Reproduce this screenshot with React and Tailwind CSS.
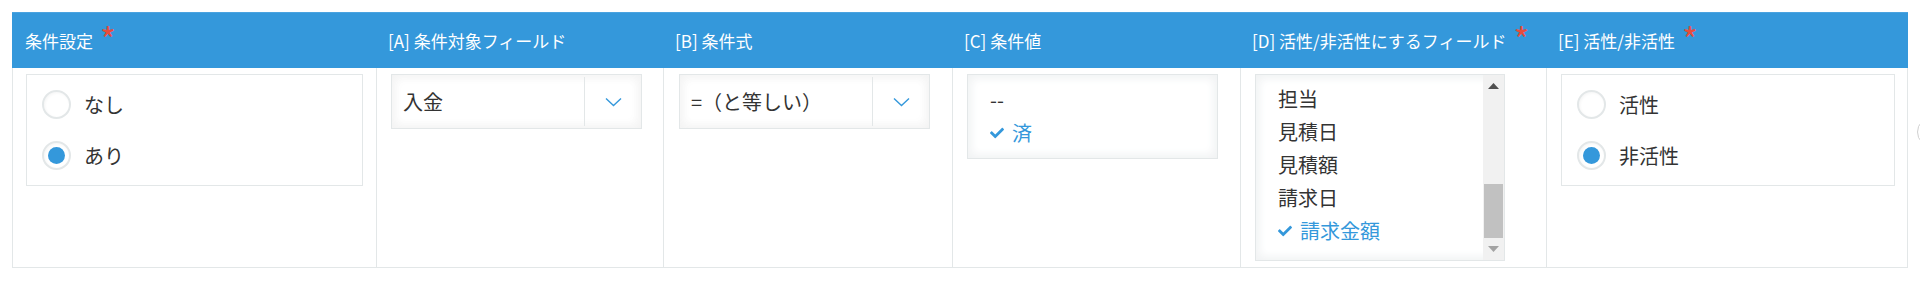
import { FaCheck } from 'react-icons/fa';

const COLS = 'grid grid-cols-[363px_287px_289px_288px_306px_363px]';
const FONT = { fontFamily: '"Noto Sans CJK JP", "Noto Sans", sans-serif' };

const headers = [
    { label: '条件設定', required: true },
    { label: '[A] 条件対象フィールド' },
    { label: '[B] 条件式' },
    { label: '[C] 条件値' },
    { label: '[D] 活性/非活性にするフィールド', required: true },
    { label: '[E] 活性/非活性', required: true },
];

const Required = () => (
    <span className="ml-[7px] self-start mt-[9px] text-[34px] leading-[34px] text-[#e74c3c]">*</span>
);

const RadioGroup = ({ options, selected }) => (
    <div className="border border-[#e3e7e8] bg-white py-[4px] pl-[15px]">
        {options.map((opt) => (
            <div key={opt} className="h-[51px] flex items-center">
                <span className="w-[29px] h-[29px] rounded-full border-2 border-[#e3e7e8] bg-white flex items-center justify-center shadow-[inset_1px_1px_3px_#f5f5f5]">
                    {opt === selected && <span className="w-[17px] h-[17px] rounded-full bg-[#3498db]"></span>}
                </span>
                <span className="ml-[13px] text-[20px] text-[#333]">{opt}</span>
            </div>
        ))}
    </div>
);

const Chevron = () => (
    <svg width="17" height="10" viewBox="0 0 17 10">
        <polyline points="1,1.5 8.5,8.5 16,1.5" fill="none" stroke="#3498db" strokeWidth="1.4" />
    </svg>
);

const SelectBox = ({ value }) => (
    <div className="w-[251px] h-[55px] border border-[#e3e7e8] bg-white flex shadow-[inset_1px_1px_12px_#f3f3f3,inset_-1px_-1px_12px_#f3f3f3]">
        <div className="flex-1 pl-[11px] flex items-center text-[20px] text-[#333] whitespace-nowrap">{value}</div>
        <div className="w-px bg-[#e3e7e8] my-[2px]"></div>
        <div className="w-[56px] flex items-center justify-center"><Chevron /></div>
    </div>
);

const CheckItem = ({ label, checked }) => (
    <div className={`h-[33px] flex items-center text-[20px] ${checked ? 'text-[#3498db]' : 'text-[#333]'}`}>
        {checked && <FaCheck className="w-[14px] h-[14px] mr-[8px]" />}
        {label}
    </div>
);

const Triangle = ({ up, color }) => (
    <svg width="11" height="6" viewBox="0 0 11 6">
        <polygon points={up ? '0,6 5.5,0 11,6' : '0,0 5.5,6 11,0'} fill={color} />
    </svg>
);

export default function App() {
    const fields = ['担当', '見積日', '見積額', '請求日', '請求金額'];

    return (
        <div className="w-[1920px] h-[281px] overflow-hidden bg-white" style={FONT}>
            <div className="flex items-start pt-[12px] pl-[12px]">
                <div className="w-[1896px] shrink-0">
                    <div className={`${COLS} bg-[#3498db] border-t border-[#4aa3e0]`}>
                        {headers.map((h) => (
                            <div key={h.label} className="h-[55px] flex items-center pl-[13px] text-[17px] text-white whitespace-nowrap">
                                {h.label}
                                {h.required && <Required />}
                            </div>
                        ))}
                    </div>

                    <div className={`${COLS} border-x border-b border-[#e3e7e8]`}>
                        <div className="pt-[6px] pl-[13px] pr-[13px]">
                            <RadioGroup options={['なし', 'あり']} selected="あり" />
                        </div>
                        <div className="border-l border-[#e3e7e8] pt-[6px] pl-[14px]">
                            <SelectBox value="入金" />
                        </div>
                        <div className="border-l border-[#e3e7e8] pt-[6px] pl-[15px]">
                            <SelectBox value="=（と等しい）" />
                        </div>
                        <div className="border-l border-[#e3e7e8] pt-[6px] pl-[14px]">
                            <div className="w-[251px] h-[85px] border border-[#e3e7e8] bg-white pl-[22px] pt-[8px] shadow-[inset_1px_1px_12px_#f0f2f3,inset_-1px_-1px_12px_#f0f2f3]">
                                <CheckItem label="--" />
                                <CheckItem label="済" checked />
                            </div>
                        </div>
                        <div className="border-l border-[#e3e7e8] py-[6px] pl-[14px]">
                            <div className="w-[250px] h-[187px] border border-[#e3e7e8] bg-white flex shadow-[inset_1px_1px_12px_#f0f2f3,inset_-1px_-1px_12px_#f0f2f3]">
                                <div className="flex-1 pl-[22px] pt-[7px]">
                                    {fields.map((f) => (
                                        <CheckItem key={f} label={f} checked={f === '請求金額'} />
                                    ))}
                                </div>
                                <div className="w-[21px] bg-[#f1f1f1] flex flex-col">
                                    <div className="h-[22px] flex items-center justify-center"><Triangle up color="#505050" /></div>
                                    <div className="flex-1 flex flex-col justify-end px-[1px]">
                                        <div className="h-[54px] bg-[#c1c1c1]"></div>
                                    </div>
                                    <div className="h-[22px] flex items-center justify-center"><Triangle color="#a3a3a3" /></div>
                                </div>
                            </div>
                        </div>
                        <div className="border-l border-[#e3e7e8] pt-[6px] pl-[14px] pr-[14px]">
                            <RadioGroup options={['活性', '非活性']} selected="非活性" />
                        </div>
                    </div>
                </div>
                <div className="ml-[9px] mt-[105px] w-[30px] h-[30px] shrink-0 rounded-full border border-[#d0d0d0] bg-white"></div>
            </div>
        </div>
    );
}
